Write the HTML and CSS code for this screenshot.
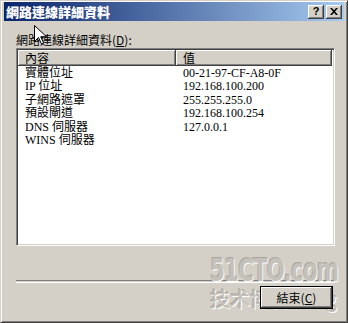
FILE: index.html
```html
<!DOCTYPE html>
<html lang="zh-Hant">
<head>
    <meta charset="UTF-8">
    <title>網路連線詳細資料</title>
    <link rel="stylesheet" href="styles.css">
</head>
<body>

    <div class="window">
        <div class="title-bar">
            <span class="title-text">網路連線詳細資料</span>
            <div class="title-buttons">
                <button class="title-btn">?</button>
                <button class="title-btn close">
                    <svg width="8" height="7" viewBox="0 0 8 7">
                        <path d="M0 0h2l2 2.3L6 0h2L5 3.5 8 7H6L4 4.7 2 7H0l3-3.5z" fill="#000"/>
                    </svg>
                </button>
            </div>
        </div>

        <div class="content">
            <div class="label">網路連線詳細資料(<u>D</u>):</div>

            <div class="list-box">
                <div class="list-header">
                    <div class="col-head first">內容</div>
                    <div class="col-head">值</div>
                </div>
                <div class="list-rows">
                    <div class="row"><span class="cell key">實體位址</span><span class="cell">00-21-97-CF-A8-0F</span></div>
                    <div class="row"><span class="cell key">IP 位址</span><span class="cell">192.168.100.200</span></div>
                    <div class="row"><span class="cell key">子網路遮罩</span><span class="cell">255.255.255.0</span></div>
                    <div class="row"><span class="cell key">預設閘道</span><span class="cell">192.168.100.254</span></div>
                    <div class="row"><span class="cell key">DNS 伺服器</span><span class="cell">127.0.0.1</span></div>
                    <div class="row"><span class="cell key">WINS 伺服器</span><span class="cell"></span></div>
                </div>
            </div>

            <div class="separator"></div>

            <div class="footer">
                <button class="btn">結束(<u>C</u>)</button>
            </div>
        </div>

        <!-- watermark from the screenshot source -->
        <div class="watermark">
            <div class="wm-big">51CTO.com</div>
            <div class="wm-small">技术博客 Blog</div>
        </div>

        <svg class="cursor" width="13" height="20" viewBox="0 0 13 20">
            <path d="M0.5 0.5v16l4-4 3 6.5 2.2-1-3-6.3h5.8z" fill="#fff" stroke="#000" stroke-width="1"/>
        </svg>
    </div>

</body>
</html>
```

FILE: styles.css
```css
body {
    margin: 0;
    font-family: "Liberation Serif", "Noto Sans CJK TC", serif;
    font-size: 12px;
    color: #000;
}

.window {
    position: relative;
    width: 348px;
    height: 323px;
    box-sizing: border-box;
    background-color: #d4d0c8;
    border-top: 1px solid #d4d0c8;
    border-left: 1px solid #d4d0c8;
    border-right: 1px solid #404040;
    border-bottom: 1px solid #404040;
    box-shadow: inset 1px 1px #fff, inset -1px -1px #808080;
    padding: 1px 3px 3px 3px;
    display: flex;
    flex-direction: column;
    overflow: hidden;
}

/* Title bar */
.title-bar {
    height: 19px;
    display: flex;
    align-items: center;
    justify-content: space-between;
    padding: 0 2px 0 2px;
    background: linear-gradient(to right, #0a246a, #a6caf0);
}

.title-text {
    font-family: "Noto Sans CJK TC", sans-serif;
    font-weight: 900;
    font-size: 13px;
    color: #fff;
}

.title-buttons {
    display: flex;
    gap: 2px;
}

.title-btn {
    width: 16px;
    height: 14px;
    padding: 0;
    margin: 0;
    display: flex;
    align-items: center;
    justify-content: center;
    background-color: #d4d0c8;
    border: none;
    box-shadow: inset -1px -1px #404040, inset 1px 1px #fff, inset -2px -2px #808080;
    font-family: "Liberation Sans", sans-serif;
    font-weight: 700;
    font-size: 11px;
    line-height: 1;
    color: #000;
}

/* Content */
.content {
    flex: 1;
    display: flex;
    flex-direction: column;
    padding: 11px 9px 0 12px;
}

.label {
    font-family: "Noto Sans CJK TC", sans-serif;
    font-size: 12px;
    line-height: 16px;
}

.list-box {
    height: 198px;
    box-sizing: border-box;
    background-color: #fff;
    border-top: 1px solid #808080;
    border-left: 1px solid #808080;
    border-right: 1px solid #fff;
    border-bottom: 1px solid #fff;
    box-shadow: inset 1px 1px #404040, inset -1px -1px #d4d0c8;
    padding: 1px 2px 2px 1px;
}

.list-header {
    display: flex;
    height: 16px;
}

.col-head {
    flex: 1;
    box-sizing: border-box;
    padding-left: 7px;
    background-color: #d4d0c8;
    box-shadow: inset -1px -1px #404040, inset 1px 1px #fff, inset -2px -2px #808080;
    font-family: "Noto Sans CJK TC", sans-serif;
    line-height: 15px;
}

.col-head.first {
    flex: 0 0 158px;
}

.list-rows {
    padding-top: 1px;
}

.row {
    display: flex;
    height: 13.4px;
    line-height: 13px;
}

.cell {
    flex: 1;
    white-space: nowrap;
    padding-left: 7px;
}

.cell.key {
    flex: 0 0 151px;
}

.separator {
    margin-top: 34px;
    height: 1px;
    border-top: 1px solid #808080;
    border-bottom: 1px solid #fff;
}

.footer {
    display: flex;
    justify-content: flex-end;
    padding-top: 3px;
    padding-right: 2px;
}

.btn {
    position: relative;
    z-index: 2;
    width: 73px;
    height: 23px;
    padding: 0;
    background-color: #d4d0c8;
    border: 1px solid #000;
    box-shadow: inset -1px -1px #404040, inset 1px 1px #fff, inset -2px -2px #808080;
    font-family: "Noto Sans CJK TC", sans-serif;
    font-size: 12px;
    color: #000;
}

/* Watermark and pointer lie over the dialog */
.watermark {
    position: absolute;
    z-index: 1;
    left: 209px;
    top: 253px;
    width: 136px;
    white-space: nowrap;
    color: #c4c1ba;
    text-shadow: 1px 1px #fff, -1px -1px #a9a59d;
    pointer-events: none;
}

.wm-big {
    font-family: "DejaVu Sans Condensed", "DejaVu Sans", sans-serif;
    font-weight: 700;
    font-size: 32px;
    line-height: 32px;
    letter-spacing: -1px;
    transform: scaleX(0.74);
    transform-origin: left;
}

.wm-small {
    font-family: "Noto Sans CJK SC", sans-serif;
    font-size: 20px;
    line-height: 24px;
    margin-top: 1px;
}

.cursor {
    position: absolute;
    z-index: 3;
    left: 33px;
    top: 24px;
}
```
